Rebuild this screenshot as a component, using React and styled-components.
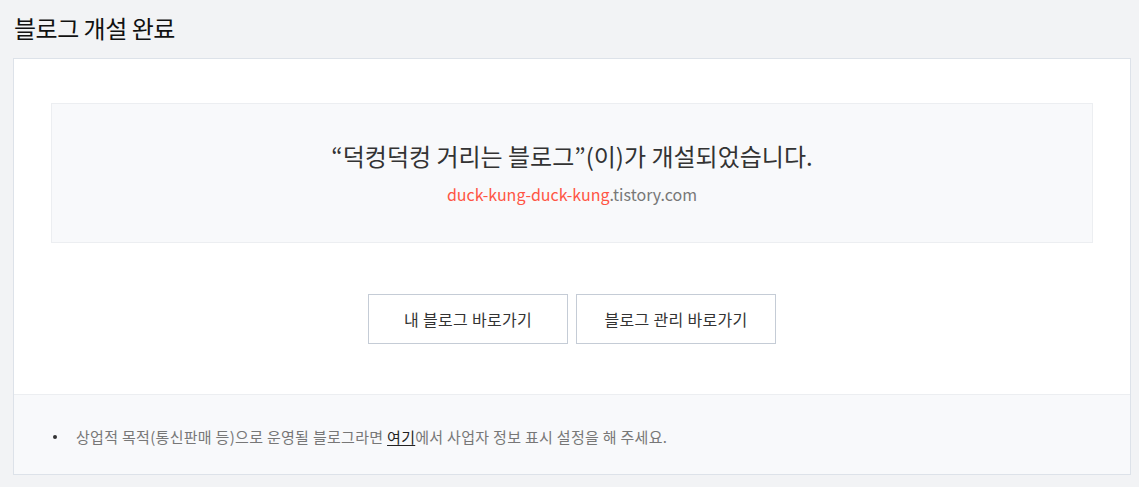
import React from 'react';
import styled, { createGlobalStyle } from 'styled-components';

const GlobalStyle = createGlobalStyle`
  html, body {
    margin: 0;
    padding: 0;
    background: #f2f3f5;
  }
  body {
    font-family: "Noto Sans CJK KR", "Noto Sans", sans-serif;
    color: #333;
  }
`;

const Page = styled.div`
  padding: 0 8px 13px 13px;
`;

const Title = styled.h2`
  margin: 0;
  padding: 12px 0 0 1px;
  height: 58px;
  box-sizing: border-box;
  font-size: 24px;
  font-weight: 400;
  color: #111;
  letter-spacing: -0.5px;
  line-height: 32px;
`;

const Card = styled.div`
  background: #fff;
  border: 1px solid #dde2e9;
`;

const Body = styled.div`
  padding: 44px 37px 50px;
  display: flex;
  flex-direction: column;
  align-items: center;
`;

const Notice = styled.div`
  align-self: stretch;
  height: 140px;
  box-sizing: border-box;
  background: #f8f9fb;
  border: 1px solid #eceef1;
  display: flex;
  flex-direction: column;
  align-items: center;
  justify-content: center;
  padding-bottom: 1px;
`;

const Headline = styled.p`
  margin: 0;
  font-size: 24px;
  line-height: 32px;
  color: #333;
`;

const Url = styled.p`
  margin: 10px 0 0;
  font-size: 16px;
  line-height: 24px;
  color: #777;
`;

const Sub = styled.span`
  color: #ff5544;
`;

const Buttons = styled.div`
  margin-top: 51px;
  display: flex;
  gap: 8px;
`;

const Button = styled.a`
  width: 200px;
  height: 50px;
  box-sizing: border-box;
  border: 1px solid #c5ccd6;
  background: #fff;
  display: flex;
  align-items: center;
  justify-content: center;
  font-size: 16px;
  color: #333;
  text-decoration: none;
  letter-spacing: 0.3px;
  cursor: pointer;
`;

const Footer = styled.ul`
  margin: 0;
  padding: 3px 0 0 38px;
  list-style: none;
  height: 80px;
  box-sizing: border-box;
  background: #f8f9fb;
  border-top: 1px solid #eceef1;
  display: flex;
  align-items: center;
`;

const Item = styled.li`
  position: relative;
  padding-left: 24px;
  font-size: 15px;
  color: #777;
  letter-spacing: 0.3px;

  &::before {
    content: '';
    position: absolute;
    left: 1px;
    top: 50%;
    width: 4px;
    height: 4px;
    margin-top: -1px;
    border-radius: 50%;
    background: #333;
  }
`;

const Link = styled.a`
  color: #222;
  text-decoration: underline;
  text-underline-offset: 2px;
`;

export default function App() {
  return (
    <Page>
      <GlobalStyle />
      <Title>블로그 개설 완료</Title>
      <Card>
        <Body>
          <Notice>
            <Headline>“덕컹덕컹 거리는 블로그”(이)가 개설되었습니다.</Headline>
            <Url>
              <Sub>duck-kung-duck-kung</Sub>.tistory.com
            </Url>
          </Notice>
          <Buttons>
            <Button>내 블로그 바로가기</Button>
            <Button>블로그 관리 바로가기</Button>
          </Buttons>
        </Body>
        <Footer>
          <Item>
            상업적 목적(통신판매 등)으로 운영될 블로그라면 <Link>여기</Link>에서 사업자 정보 표시 설정을 해 주세요.
          </Item>
        </Footer>
      </Card>
    </Page>
  );
}
